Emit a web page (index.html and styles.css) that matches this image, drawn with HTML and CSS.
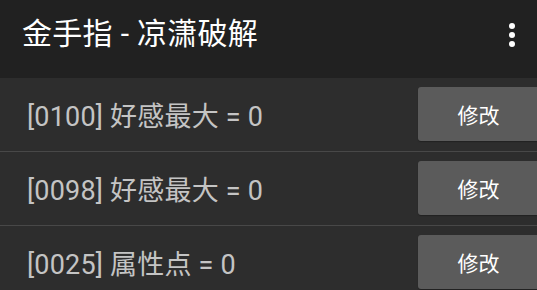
FILE: index.html
```html
<!DOCTYPE html>
<html lang="zh-CN">
<head>
<meta charset="utf-8">
<title>金手指 - 凉潇破解</title>
<link rel="stylesheet" href="styles.css">
</head>
<body>
<div class="app">
  <header class="toolbar">
    <h1 class="title">金手指 - 凉潇破解</h1>
    <button class="overflow" aria-label="更多">
      <svg width="8" height="26" viewBox="0 0 8 26"><circle cx="4" cy="4" r="3" fill="#fff"/><circle cx="4" cy="13" r="3" fill="#fff"/><circle cx="4" cy="22" r="3" fill="#fff"/></svg>
    </button>
  </header>
  <ul class="list">
    <li class="row"><span class="label">[0100] 好感最大 = 0</span><button class="edit">修改</button></li>
    <li class="row"><span class="label">[0098] 好感最大 = 0</span><button class="edit">修改</button></li>
    <li class="row"><span class="label">[0025] 属性点 = 0</span><button class="edit">修改</button></li>
  </ul>
</div>
</body>
</html>
```

FILE: styles.css
```css
html, body {
  margin: 0;
  padding: 0;
  background: #2d2d2d;
  overflow: hidden;
  font-family: Roboto, "Noto Sans CJK SC", sans-serif;
}
.app {
  width: 537px;
  height: 290px;
  overflow: hidden;
}
.toolbar {
  height: 78px;
  background: #212121;
  display: flex;
  align-items: center;
  justify-content: space-between;
  padding: 0 21px 10px 22px;
  box-sizing: border-box;
}
.title {
  margin: 0;
  font-weight: 400;
  font-size: 30px;
  letter-spacing: 0.3px;
  color: #ffffff;
  line-height: 1;
}
.overflow {
  background: none;
  border: 0;
  padding: 0;
  display: flex;
  margin-top: 2px;
}
.list {
  list-style: none;
  margin: 0;
  padding: 0;
}
.row {
  height: 73px;
  border-bottom: 1px solid #484848;
  display: flex;
  align-items: center;
  justify-content: space-between;
  padding-left: 27px;
}
.label {
  color: #c4c4c4;
  font-size: 27px;
  letter-spacing: 0.2px;
  white-space: nowrap;
}
.edit {
  width: 121px;
  height: 54px;
  margin-right: -2px;
  margin-top: -1px;
  background: #5b5b5b;
  border: 0;
  border-radius: 3px;
  color: #ffffff;
  font-family: Roboto, "Noto Sans CJK SC", sans-serif;
  font-size: 21px;
  padding: 0;
  box-shadow: 0 1px 1px rgba(0,0,0,0.25);
}
```
